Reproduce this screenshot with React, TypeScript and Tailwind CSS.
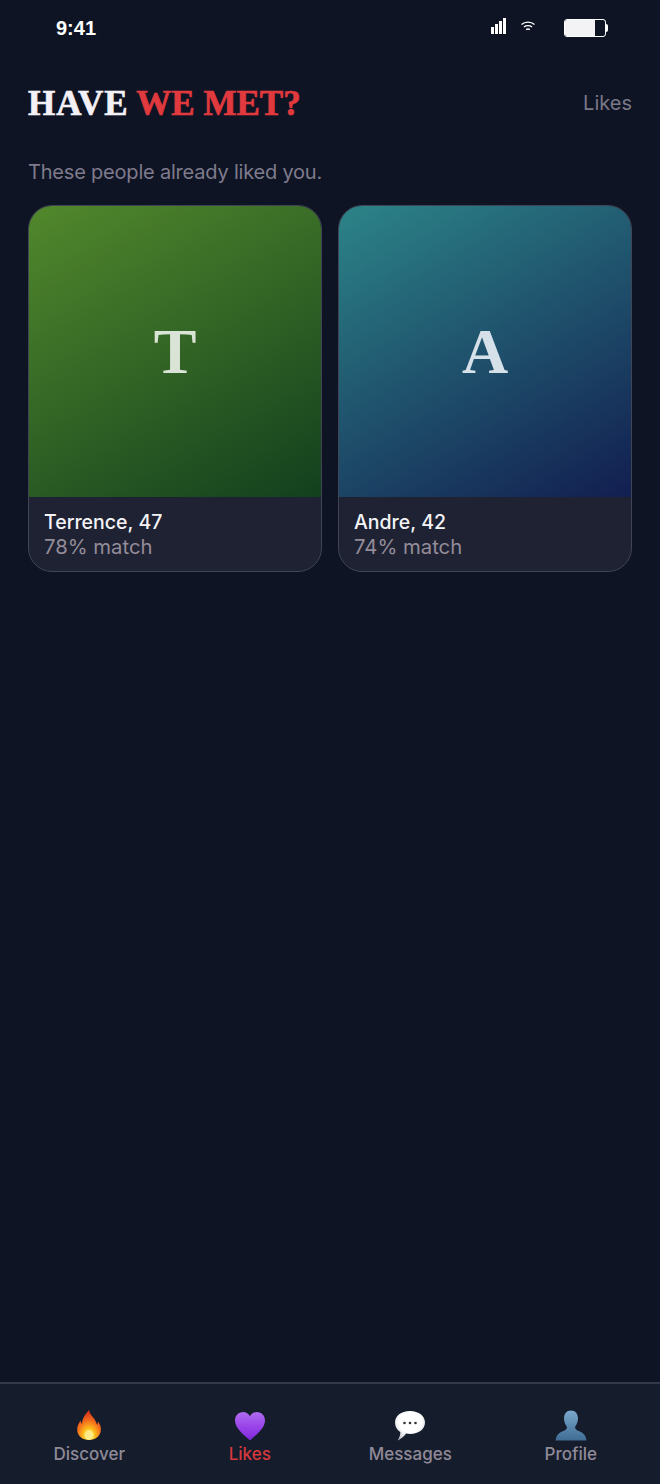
import React from "react";

const sans = "font-['Inter','Noto_Sans',sans-serif]";

function Signal() {
  return (
    <svg width="15" height="16" viewBox="0 0 15 16" fill="#fff">
      <rect x="0" y="9" width="3" height="7" />
      <rect x="4" y="6" width="3" height="10" />
      <rect x="8" y="3" width="3" height="13" />
      <rect x="12" y="0" width="3" height="16" />
    </svg>
  );
}
function Wifi() {
  return (
    <svg width="14" height="10" viewBox="0 0 14 10" fill="none" stroke="#fff" strokeWidth="1.3">
      <path d="M0.5 3.500C4 0.300 10 0.300 13.500 3.500" />
      <path d="M3 6C5.200 4.200 8.800 4.200 11 6" />
      <path d="M5.200 8.600C6.200 7.900 7.800 7.900 8.800 8.600" strokeWidth="1.6" />
    </svg>
  );
}
function Battery() {
  return (
    <div className="flex items-center">
      <div className="flex h-[18px] w-[42px] justify-start overflow-hidden rounded-[3px] border border-white bg-[#0e1424]">
        <div className="h-full w-[30px] bg-[#f3f3f5]" />
      </div>
      <div className="h-[8px] w-[2px] rounded-r-sm bg-white" />
    </div>
  );
}

function Flame() {
  return (
    <svg width="26" height="32" viewBox="0 0 28 32" preserveAspectRatio="none">
      <defs>
        <radialGradient id="f1" cx="50%" cy="85%" r="75%">
          <stop offset="0" stopColor="#fff6b0" />
          <stop offset="0.3" stopColor="#fdc31c" />
          <stop offset="0.65" stopColor="#f4711c" />
          <stop offset="1" stopColor="#d8391a" />
        </radialGradient>
      </defs>
      <path d="M14 1C15 6 19 8 21 12C22 14 22.500 15 22.800 16C23.500 14.800 23.700 13.500 23.500 12.200C26 15 27 18 26.800 21C26.500 27 21 31 14 31C7 31 1.500 27 1.300 21C1.100 17 3 14 5 11.500C5.200 13 5.600 14 6.500 15C6.500 9 10.500 5 14 1Z" fill="url(#f1)" />
      <ellipse cx="14" cy="26" rx="5" ry="5" fill="#ffeb8a" opacity="0.85" />
    </svg>
  );
}
function Heart() {
  return (
    <svg width="32" height="30" viewBox="0 0 32 30">
      <defs>
        <linearGradient id="h1" x1="0" y1="0" x2="0" y2="1">
          <stop offset="0" stopColor="#b06cf0" />
          <stop offset="0.5" stopColor="#9a45ea" />
          <stop offset="1" stopColor="#7d28d8" />
        </linearGradient>
      </defs>
      <path d="M16 29.500C12 25.500 1 18 1 9.500C1 4.500 4.700 1 9 1C12 1 14.700 2.600 16 5.300C17.300 2.600 20 1 23 1C27.300 1 31 4.500 31 9.500C31 18 20 25.500 16 29.500Z" fill="url(#h1)" />
    </svg>
  );
}
function Bubble() {
  return (
    <svg width="32" height="31" viewBox="0 0 32 31">
      <defs>
        <radialGradient id="b1" cx="50%" cy="35%" r="70%">
          <stop offset="0.55" stopColor="#ffffff" />
          <stop offset="1" stopColor="#b9bdc4" />
        </radialGradient>
      </defs>
      <path d="M16 1C25 1 31 6 31 12.500C31 19 25 24 16 24C14.500 24 13.200 23.900 12 23.600C10.500 26 7.500 29 3.500 30.500C5.500 28 6.300 25 6.400 22.300C3 20 1 16.500 1 12.500C1 6 7 1 16 1Z" fill="url(#b1)" />
      <circle cx="10.500" cy="13" r="1.300" fill="#333" />
      <circle cx="16" cy="13" r="1.300" fill="#333" />
      <circle cx="21.500" cy="13" r="1.300" fill="#333" />
    </svg>
  );
}
function Person() {
  return (
    <svg width="32" height="31" viewBox="0 0 32 31">
      <defs>
        <linearGradient id="p1" x1="0" y1="0" x2="0" y2="1">
          <stop offset="0" stopColor="#7ba8cc" />
          <stop offset="1" stopColor="#3f6c94" />
        </linearGradient>
      </defs>
      <path d="M16 0.500C20.500 0.500 23 4 23 8.500C23 12 21.500 15 20 17C20 19.500 22 20.500 25 21.500C29 23 31 26 31.500 30.500H0.500C1 26 3 23 7 21.500C10 20.500 12 19.500 12 17C10.500 15 9 12 9 8.500C9 4 11.500 0.500 16 0.500Z" fill="url(#p1)" />
    </svg>
  );
}

function Card({ letter, name, match, gradient, letterColor }: { letter: string; name: string; match: string; gradient: string; letterColor: string }) {
  return (
    <div className="flex flex-1 flex-col overflow-hidden rounded-[24px] border border-[#3f4555] bg-[#1e2233]">
      <div className={`flex h-[291px] items-center justify-center ${gradient}`}>
        <span className={`font-['Liberation_Serif',serif] text-[64px] font-bold leading-none ${letterColor}`}>{letter}</span>
      </div>
      <div className={`flex h-[74px] flex-col px-[15px] pt-[13px] ${sans}`}>
        <div className="text-[19.5px] font-medium leading-[24px] text-[#f4f3f7]">{name}</div>
        <div className="text-[20.3px] leading-[26px] text-[#948c98]">{match}</div>
      </div>
    </div>
  );
}

function NavItem({ icon, label, active }: { icon: React.ReactNode; label: string; active?: boolean }) {
  return (
    <div className="flex flex-1 flex-col items-center">
      <div className="flex h-[31px] items-end justify-center">{icon}</div>
      <div className={`text-[17px] font-medium leading-[26px] ${active ? "text-[#d6383c]" : "text-[#908a98]"}`}>{label}</div>
    </div>
  );
}

export default function App() {
  return (
    <div className={`flex h-[1484px] w-[660px] flex-col bg-[#0e1424] ${sans}`}>
      <div className="flex h-[56px] items-center justify-between pl-[56px] pr-[52px]">
        <span className="font-['Liberation_Sans',sans-serif] text-[20px] font-bold text-white">9:41</span>
        <div className="flex items-center">
          <div className="-mt-[4px]"><Signal /></div>
          <div className="ml-[15px] mr-[29px] -mt-[4px]"><Wifi /></div>
          <Battery />
        </div>
      </div>
      <div className="flex h-[94px] items-center justify-between px-[28px]">
        <h1 className="font-['Liberation_Serif',serif] text-[35px] font-bold leading-none text-[#f3f0f6] [-webkit-text-stroke:0.7px_currentColor]">
          <span className="tracking-[1px]">HAVE </span>
          <span className="-ml-[2px] text-[#e03a3e]">WE MET?</span>
        </h1>
        <span className="text-[20px] text-[#7b7888]">Likes</span>
      </div>
      <p className="mt-[8px] px-[28px] text-[20px] leading-[28px] tracking-[-0.2px] text-[#7f7b8c]">These people already liked you.</p>
      <div className="mt-[19px] flex gap-[16px] px-[28px]">
        <Card letter="T" name="Terrence, 47" match="78% match" letterColor="text-[#d9e4d6]" gradient="bg-[linear-gradient(150deg,#52882c,#12401e)]" />
        <Card letter="A" name="Andre, 42" match="74% match" letterColor="text-[#d6e0e8]" gradient="bg-[linear-gradient(150deg,#2c8488,#121e50)]" />
      </div>
      <div className="mt-auto flex h-[102px] items-start border-t-2 border-[#343a4a] bg-[#151c2c] px-[9px] pt-[26px]">
        <NavItem icon={<Flame />} label="Discover" />
        <NavItem icon={<Heart />} label="Likes" active />
        <NavItem icon={<Bubble />} label="Messages" />
        <NavItem icon={<Person />} label="Profile" />
      </div>
    </div>
  );
}
